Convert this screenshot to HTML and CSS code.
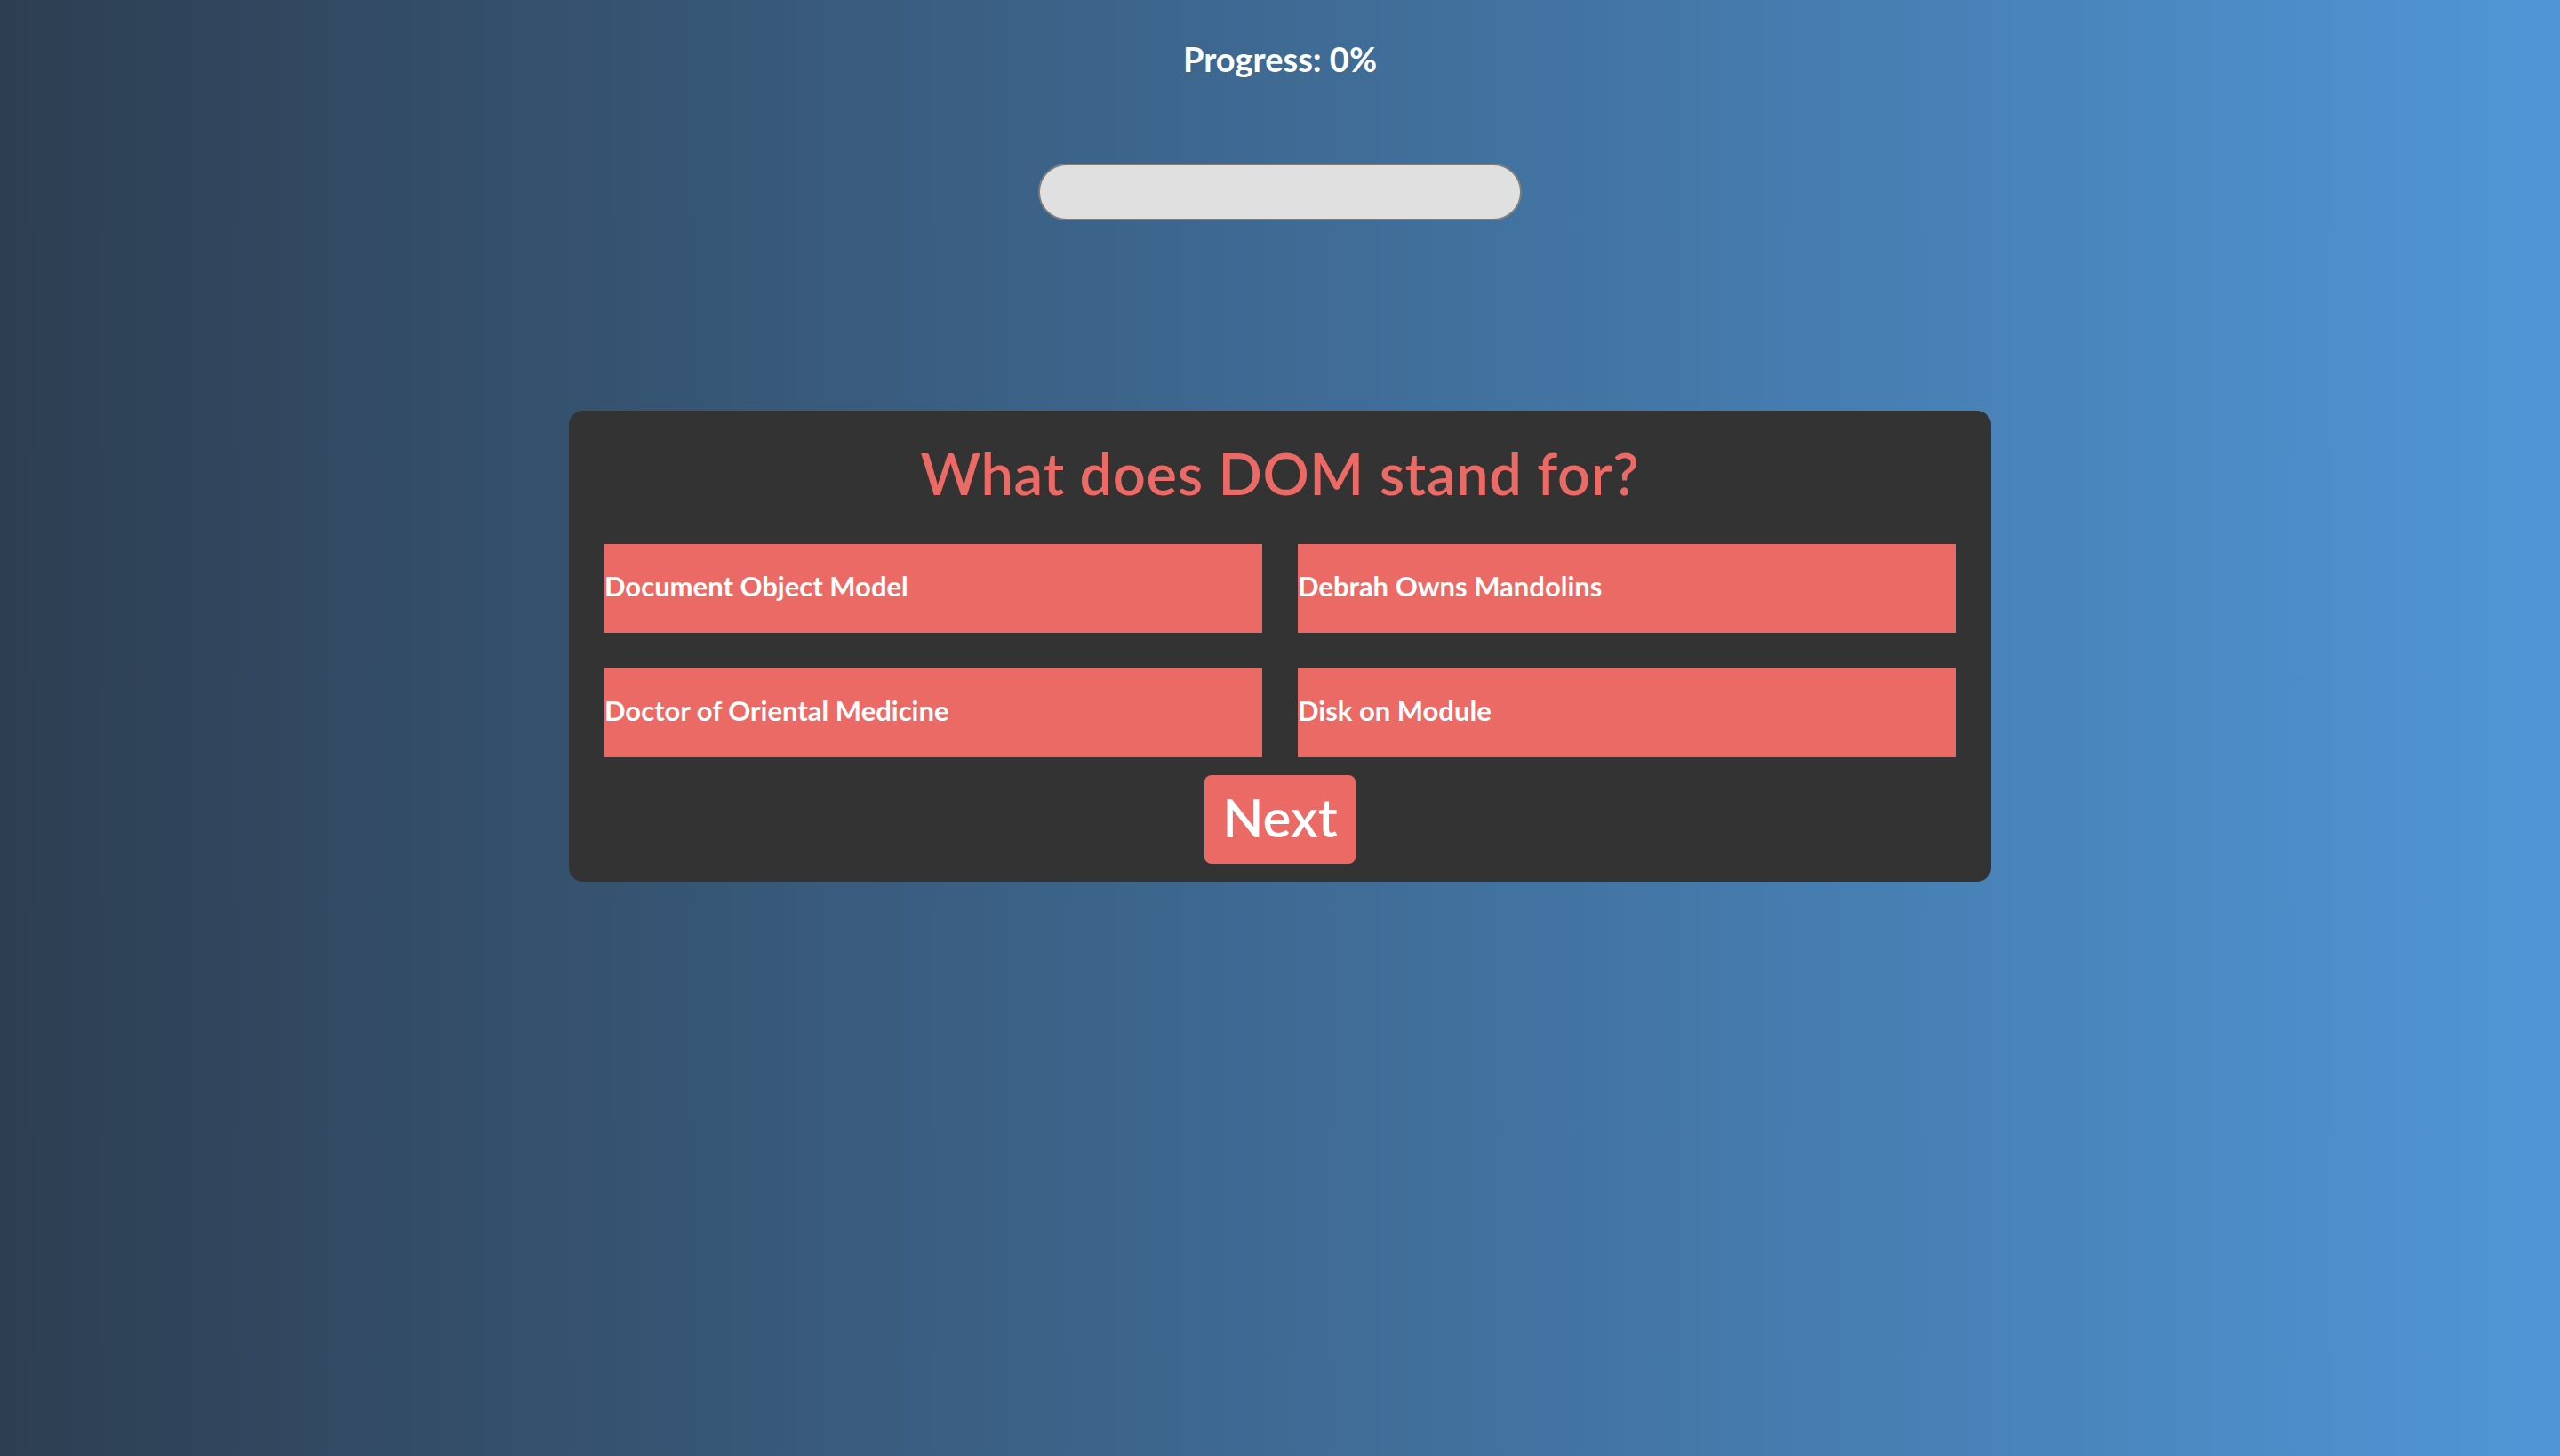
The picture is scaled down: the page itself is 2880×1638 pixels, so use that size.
FILE: index.html
```html
<!DOCTYPE html>
<html lang="en">
<head>
<meta charset="utf-8">
<title>Quiz</title>
<link rel="stylesheet" href="styles.css">
</head>
<body>
  <div class="page">
    <header class="progress">
      <h3 class="progress-text">Progress: 0%</h3>
      <div class="progress-bar"><div class="progress-fill" style="width:0%"></div></div>
    </header>
    <main class="card">
      <h1 class="question">What does DOM stand for?</h1>
      <div class="answers">
        <button class="answer">Document Object Model</button>
        <button class="answer">Debrah Owns Mandolins</button>
        <button class="answer">Doctor of Oriental Medicine</button>
        <button class="answer">Disk on Module</button>
      </div>
      <button class="next">Next</button>
    </main>
  </div>
</body>
</html>
```
FILE: styles.css
```css
* { box-sizing: border-box; }
html, body { margin: 0; padding: 0; }
body {
  min-height: 100vh;
  background: linear-gradient(to right, #2d3e51, #5096d6);
  font-family: Lato, "Open Sans", sans-serif;
  color: #fff;
}
.page {
  display: flex;
  flex-direction: column;
  align-items: center;
  padding-top: 46px;
}
.progress {
  display: flex;
  flex-direction: column;
  align-items: center;
}
.progress-text {
  margin: 0;
  font-size: 38px;
  line-height: 40px;
  font-weight: 700;
}
.progress-bar {
  margin-top: 98px;
  width: 544px;
  height: 64px;
  border: 2px solid #7e7e7e;
  border-radius: 32px;
  background: #e0e0e0;
  overflow: hidden;
}
.progress-fill {
  height: 100%;
  background: #ec6a66;
}
.card {
  margin-top: 214px;
  width: 1600px;
  background: #333333;
  border-radius: 16px;
  padding: 0 40px 20px;
  display: flex;
  flex-direction: column;
  align-items: center;
}
.question {
  margin: 0;
  height: 150px;
  padding-bottom: 10px;
  display: flex;
  align-items: center;
  color: #ec6a66;
  font-size: 65px;
  font-weight: 600;
  letter-spacing: 0.6px;
}
.answers {
  width: 100%;
  display: grid;
  grid-template-columns: 1fr 1fr;
  gap: 40px;
}
.answer {
  height: 100px;
  border: 0;
  padding: 0 0 6px;
  margin: 0;
  background: #ec6a66;
  color: #fff;
  font-family: Lato, "Open Sans", sans-serif;
  font-size: 31px;
  font-weight: 700;
  text-align: left;
}
.next {
  margin-top: 20px;
  width: 170px;
  height: 100px;
  border: 0;
  border-radius: 8px;
  background: #ec6a66;
  color: #fff;
  font-family: Lato, "Open Sans", sans-serif;
  font-size: 60px;
  font-weight: 600;
  padding: 0 0 6px;
}
```
